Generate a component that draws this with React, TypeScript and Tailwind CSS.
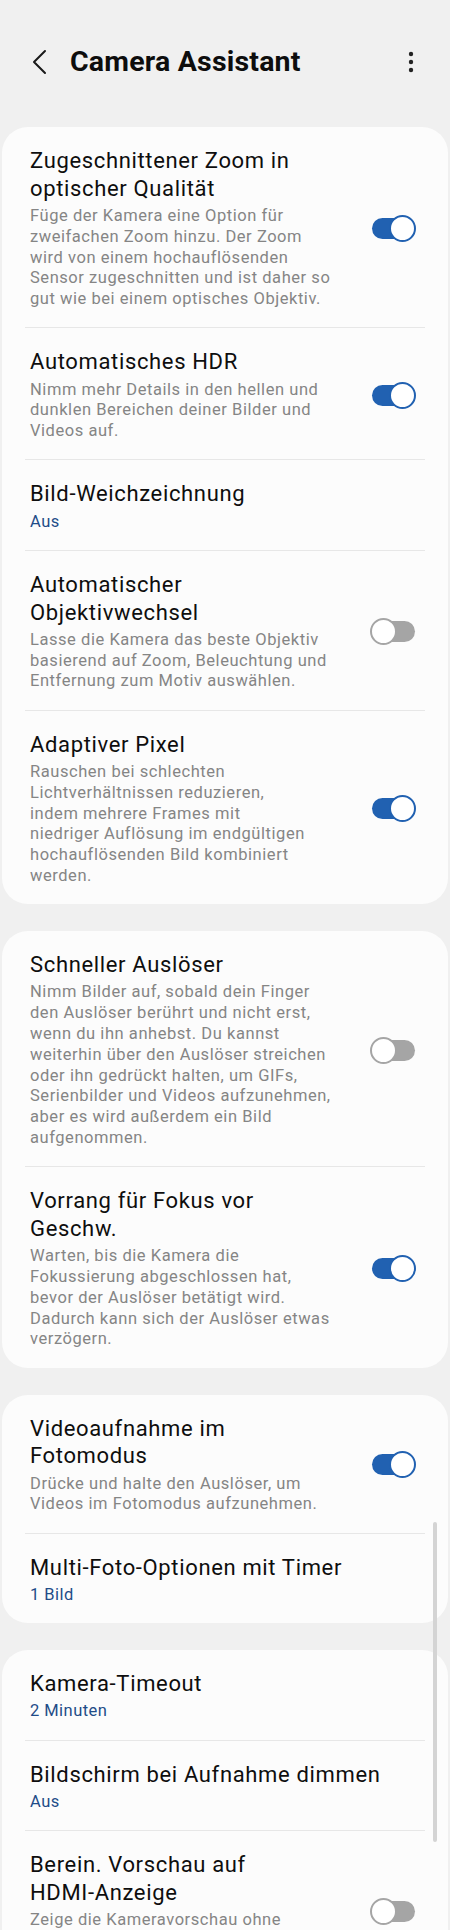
import React from "react";

type Item = {
  title: string[];
  desc?: string[];
  sub?: string;
  toggle?: "on" | "off";
};

const cards: Item[][] = [
  [
    {
      title: ["Zugeschnittener Zoom in", "optischer Qualität"],
      desc: [
        "Füge der Kamera eine Option für",
        "zweifachen Zoom hinzu. Der Zoom",
        "wird von einem hochauflösenden",
        "Sensor zugeschnitten und ist daher so",
        "gut wie bei einem optisches Objektiv.",
      ],
      toggle: "on",
    },
    {
      title: ["Automatisches HDR"],
      desc: [
        "Nimm mehr Details in den hellen und",
        "dunklen Bereichen deiner Bilder und",
        "Videos auf.",
      ],
      toggle: "on",
    },
    { title: ["Bild-Weichzeichnung"], sub: "Aus" },
    {
      title: ["Automatischer", "Objektivwechsel"],
      desc: [
        "Lasse die Kamera das beste Objektiv",
        "basierend auf Zoom, Beleuchtung und",
        "Entfernung zum Motiv auswählen.",
      ],
      toggle: "off",
    },
    {
      title: ["Adaptiver Pixel"],
      desc: [
        "Rauschen bei schlechten",
        "Lichtverhältnissen reduzieren,",
        "indem mehrere Frames mit",
        "niedriger Auflösung im endgültigen",
        "hochauflösenden Bild kombiniert",
        "werden.",
      ],
      toggle: "on",
    },
  ],
  [
    {
      title: ["Schneller Auslöser"],
      desc: [
        "Nimm Bilder auf, sobald dein Finger",
        "den Auslöser berührt und nicht erst,",
        "wenn du ihn anhebst. Du kannst",
        "weiterhin über den Auslöser streichen",
        "oder ihn gedrückt halten, um GIFs,",
        "Serienbilder und Videos aufzunehmen,",
        "aber es wird außerdem ein Bild",
        "aufgenommen.",
      ],
      toggle: "off",
    },
    {
      title: ["Vorrang für Fokus vor", "Geschw."],
      desc: [
        "Warten, bis die Kamera die",
        "Fokussierung abgeschlossen hat,",
        "bevor der Auslöser betätigt wird.",
        "Dadurch kann sich der Auslöser etwas",
        "verzögern.",
      ],
      toggle: "on",
    },
  ],
  [
    {
      title: ["Videoaufnahme im", "Fotomodus"],
      desc: ["Drücke und halte den Auslöser, um", "Videos im Fotomodus aufzunehmen."],
      toggle: "on",
    },
    { title: ["Multi-Foto-Optionen mit Timer"], sub: "1 Bild" },
  ],
  [
    { title: ["Kamera-Timeout"], sub: "2 Minuten" },
    { title: ["Bildschirm bei Aufnahme dimmen"], sub: "Aus" },
    {
      title: ["Berein. Vorschau auf", "HDMI-Anzeige"],
      desc: [
        "Zeige die Kameravorschau ohne",
        "Symbole und Tasten auf dem",
        "HDMI-Bildschirm an.",
      ],
      toggle: "off",
    },
  ],
];

function Toggle({ on }: { on: boolean }) {
  return (
    <div className="relative w-[46px] h-[27px] shrink-0">
      <div
        className={
          on
            ? "absolute left-[2px] right-[4px] top-[3px] h-[21px] rounded-full bg-[#2161b1]"
            : "absolute left-[4px] right-[1px] top-[3px] h-[21px] rounded-full bg-[#a5a5a5]"
        }
      />
      <div
        className={
          on
            ? "absolute right-0 top-0 w-[27px] h-[27px] rounded-full bg-white border-[2px] border-[#2161b1]"
            : "absolute left-0 top-0 w-[27px] h-[27px] rounded-full bg-white border-[2px] border-[#a5a5a5]"
        }
      />
    </div>
  );
}

function Row({ item }: { item: Item }) {
  return (
    <div className="flex items-center pl-[28px] pr-[32px] pt-[20px] pb-[17.5px]">
      <div className="flex-1 min-w-0">
        <div className="text-[22px] leading-[27.7px] tracking-[0.65px] text-[#0e0e0e] whitespace-nowrap">
          {item.title.map((t, i) => (
            <div key={i}>{t}</div>
          ))}
        </div>
        {item.desc && (
          <div className="mt-[3.5px] text-[16.5px] leading-[20.8px] tracking-[0.55px] text-[#858585] whitespace-nowrap">
            {item.desc.map((t, i) => (
              <div key={i}>{t}</div>
            ))}
          </div>
        )}
        {item.sub && (
          <div className="mt-[3.5px] text-[16.5px] leading-[20.8px] tracking-[0.45px] text-[#1f4c88]">
            {item.sub}
          </div>
        )}
      </div>
      {item.toggle && <Toggle on={item.toggle === "on"} />}
    </div>
  );
}

function Card({ items }: { items: Item[] }) {
  return (
    <div className="mx-[2px] rounded-[26px] bg-[#fcfcfc]">
      {items.map((it, i) => (
        <React.Fragment key={i}>
          {i > 0 && <div className="mx-[23px] h-px bg-[#e7e7e7]" />}
          <Row item={it} />
        </React.Fragment>
      ))}
    </div>
  );
}

export default function App() {
  return (
    <div className="relative w-[450px] h-[1930px] overflow-hidden bg-[#f0f0f0] font-['Roboto',sans-serif]">
      <div className="flex items-center h-[123px] pl-[31px] pr-[36px]">
        <svg width="16" height="26" viewBox="0 0 16 26" className="shrink-0">
          <path d="M14 2 L3 13 L14 24" fill="none" stroke="#1a1a1a" strokeWidth="2" strokeLinecap="round" strokeLinejoin="round" />
        </svg>
        <div className="ml-[23px] text-[28.5px] font-bold tracking-[0.2px] text-[#0d0d0d] leading-[34px]">Camera Assistant</div>
        <svg width="6" height="22" viewBox="0 0 6 22" className="ml-auto shrink-0">
          <circle cx="3" cy="3" r="2.2" fill="#222" />
          <circle cx="3" cy="11" r="2.2" fill="#222" />
          <circle cx="3" cy="19" r="2.2" fill="#222" />
        </svg>
      </div>
      <div className="flex flex-col gap-[27px] pt-[4px]">
        {cards.map((c, i) => (
          <Card key={i} items={c} />
        ))}
      </div>
      <div className="absolute left-[433px] top-[1522px] w-[4px] h-[320px] rounded-full bg-[#d4d4d4]" />
    </div>
  );
}
